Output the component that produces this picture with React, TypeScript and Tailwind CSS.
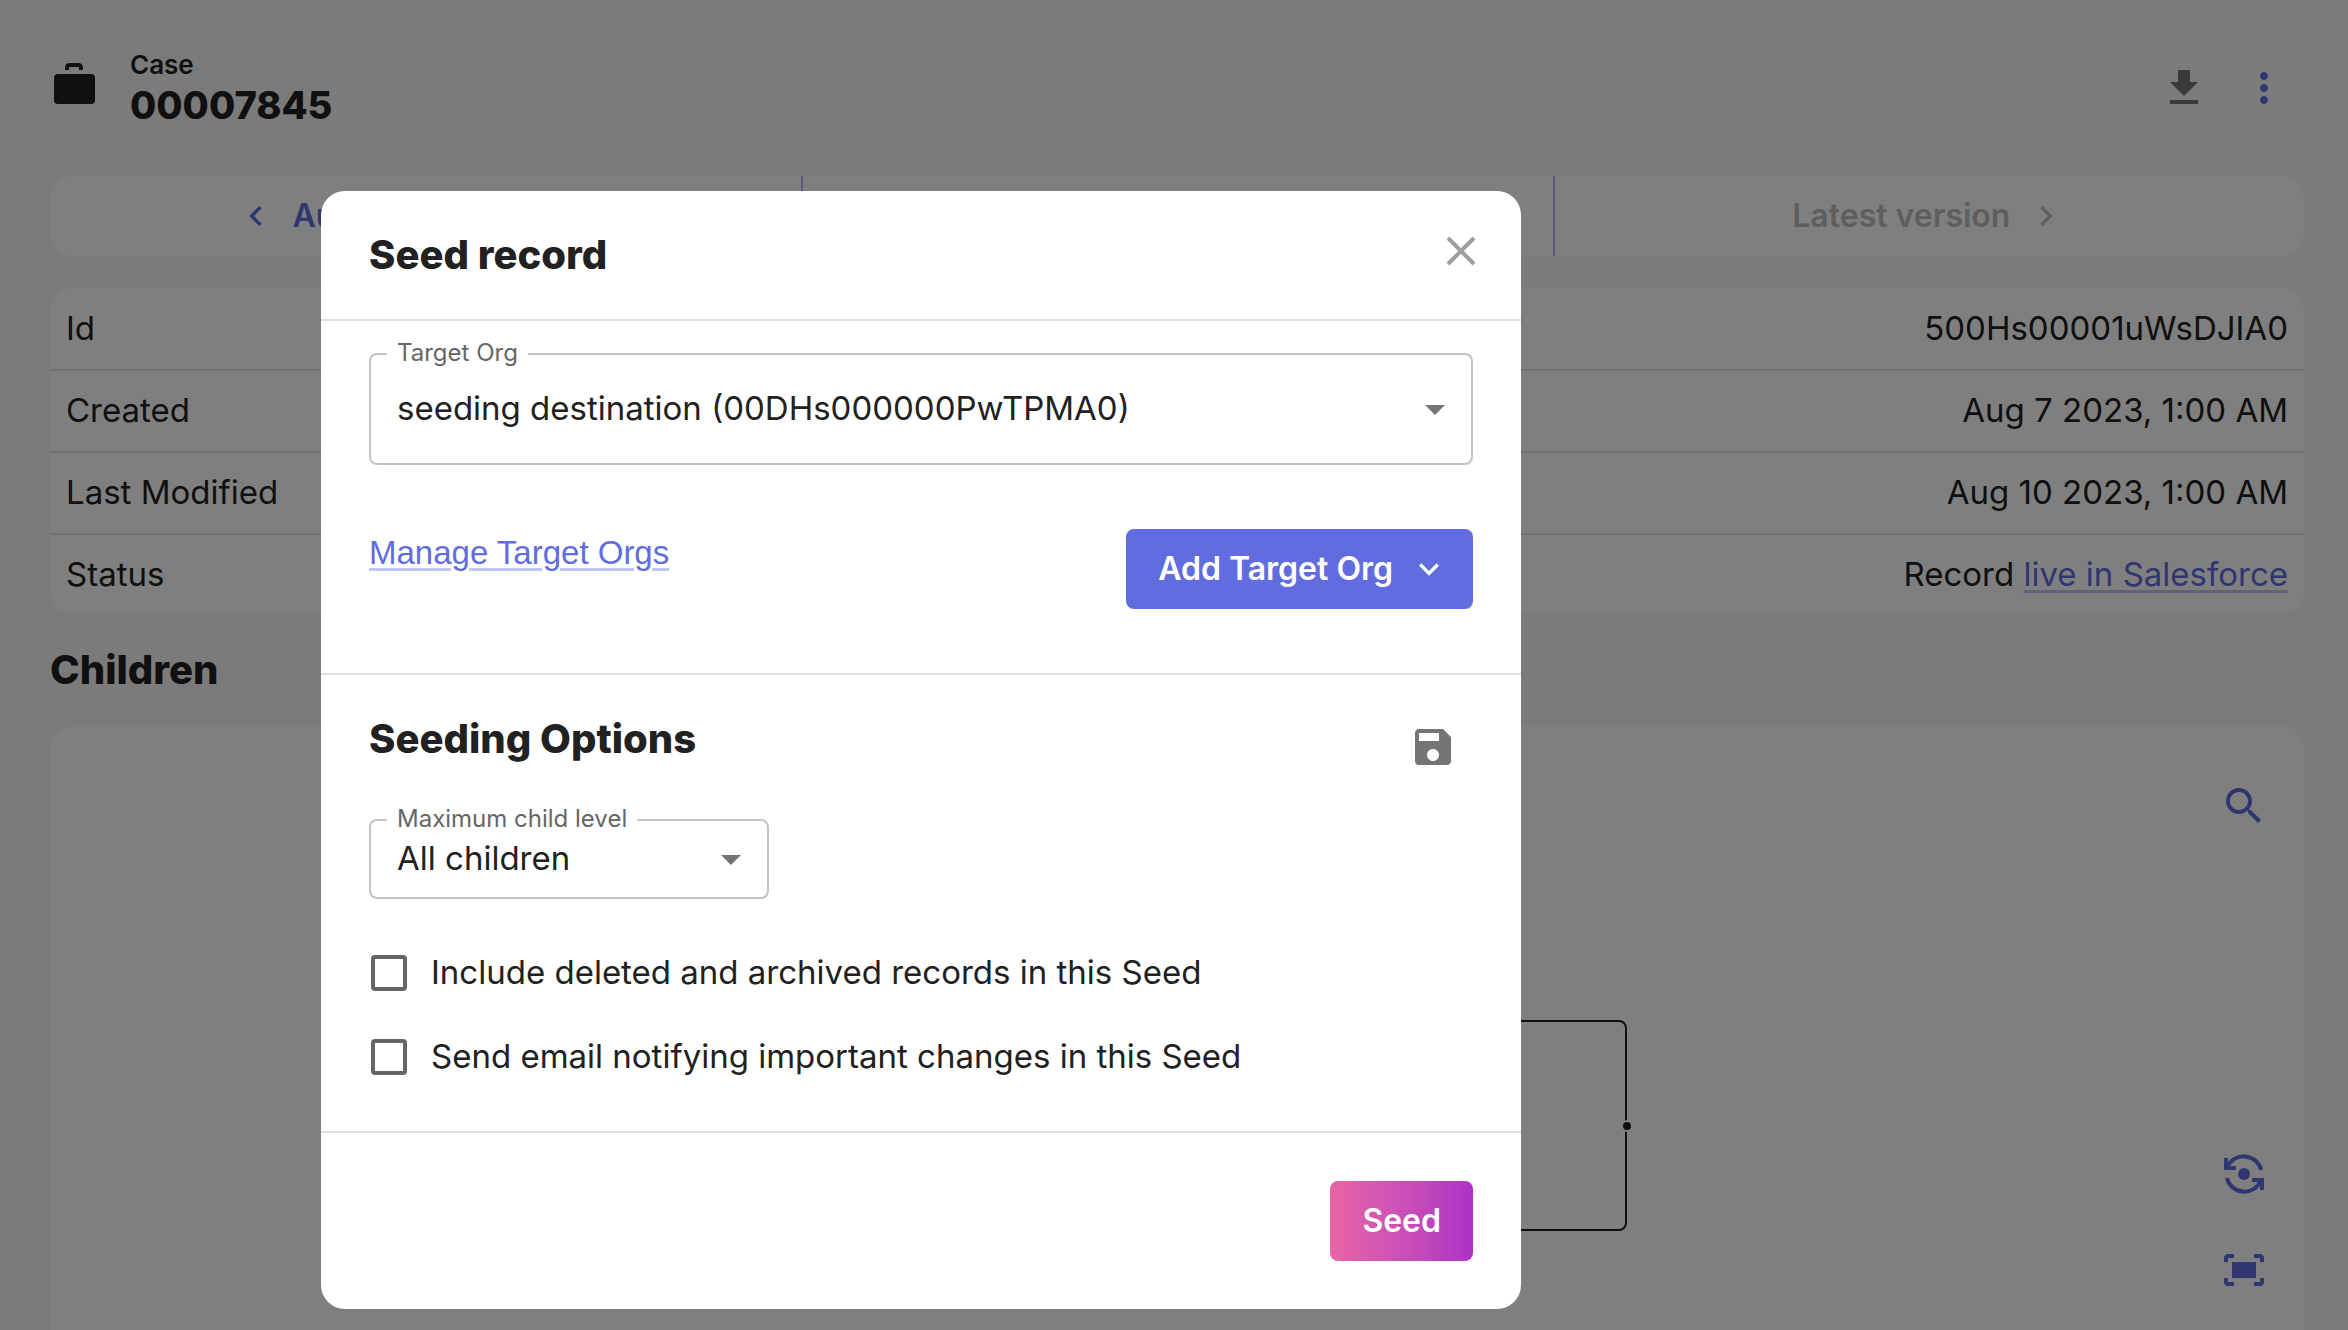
import type { ReactNode } from "react";

type IconProps = { d: string; className?: string };

function Icon({ d, className }: IconProps) {
  return (
    <svg viewBox="0 0 24 24" fill="currentColor" aria-hidden="true" className={className}>
      <path d={d} />
    </svg>
  );
}

const paths = {
  download: "M19 9h-4V3H9v6H5l7 7 7-7zM5 18v2h14v-2H5z",
  dots: "M12 8c1.1 0 2-.9 2-2s-.9-2-2-2-2 .9-2 2 .9 2 2 2zm0 2c-1.1 0-2 .9-2 2s.9 2 2 2 2-.9 2-2-.9-2-2-2zm0 6c-1.1 0-2 .9-2 2s.9 2 2 2 2-.9 2-2-.9-2-2-2z",
  left: "M15.41 7.41 14 6l-6 6 6 6 1.41-1.41L10.83 12z",
  right: "M10 6 8.59 7.41 13.17 12l-4.58 4.59L10 18l6-6z",
  down: "M7.41 8.59 12 13.17l4.59-4.58L18 10l-6 6-6-6z",
  drop: "M7 10l5 5 5-5z",
  search:
    "M15.5 14h-.79l-.28-.27C15.41 12.59 16 11.11 16 9.5 16 5.91 13.09 3 9.5 3S3 5.91 3 9.5 5.91 16 9.5 16c1.61 0 3.09-.59 4.23-1.57l.27.28v.79l5 4.99L20.49 19l-4.99-5zm-6 0C7.01 14 5 11.99 5 9.5S7.01 5 9.5 5 14 7.01 14 9.5 11.99 14 9.5 14z",
  save: "M17 3H5c-1.11 0-2 .9-2 2v14c0 1.1.89 2 2 2h14c1.1 0 2-.9 2-2V7l-4-4zm-5 16c-1.66 0-3-1.34-3-3s1.34-3 3-3 3 1.34 3 3-1.34 3-3 3zm3-10H5V5h10v4z",
  fit: "M17 4h3c1.1 0 2 .9 2 2v2h-2V6h-3V4zM4 8V6h3V4H4c-1.1 0-2 .9-2 2v2h2zm16 8v2h-3v2h3c1.1 0 2-.9 2-2v-2h-2zM7 18H4v-2H2v2c0 1.1.9 2 2 2h3v-2zM18 8H6v8h12V8z",
};

function ResetViewIcon() {
  return (
    <svg viewBox="0 0 24 24" fill="none" stroke="currentColor" strokeWidth="2" aria-hidden="true" className="size-12">
      <path d="M3.6 8.6A9 9 0 0 1 20.6 10" />
      <path d="M3.4 14A9 9 0 0 0 20.4 15.4" />
      <path d="M3 4v5h5M21 20v-5h-5" />
      <circle cx="12" cy="12" r="3" fill="currentColor" stroke="none" />
    </svg>
  );
}

function Row({ name, children }: { name: string; children: ReactNode }) {
  return (
    <tr className="h-[82px] border-b-2 border-[#e0e0e0] last:h-20 last:border-b-0">
      <th scope="row" className="px-4 text-left font-normal">
        {name}
      </th>
      <td className="px-4 text-right">{children}</td>
    </tr>
  );
}

function Field({ id, label, value, className }: { id: string; label: string; value: string; className: string }) {
  return (
    <div className="relative">
      <label htmlFor={id} className="absolute -top-4 left-[18px] bg-white px-[10px] text-2xl leading-8 text-[#666]">
        {label}
      </label>
      <select
        id={id}
        className={`w-full appearance-none rounded-lg border-2 border-[#c4c4c4] bg-white pr-16 pl-[26px] text-[33px] text-[#212121] ${className}`}
      >
        <option>{value}</option>
      </select>
      <Icon d={paths.drop} className="pointer-events-none absolute top-1/2 right-[14px] size-12 -translate-y-1/2 text-[#757575]" />
    </div>
  );
}

function Check({ label }: { label: string }) {
  return (
    <label className="flex h-[84px] items-center gap-6 text-[33px]">
      <input type="checkbox" className="ml-[2px] size-9 shrink-0 appearance-none rounded-sm border-4 border-[#666] bg-white" />
      {label}
    </label>
  );
}

export default function App() {
  return (
    <div className="h-screen overflow-hidden bg-[#f7f7f7] font-['Inter',sans-serif] text-[33px] text-[#212121]">
      <main className="flex h-full flex-col border-l-2 border-[#fafafa] pr-11 pl-12">
        <header className="flex h-44 shrink-0 items-center pr-4">
          <svg viewBox="0 0 48 48" aria-hidden="true" className="mb-4 size-12">
            <rect x="4" y="18" width="41" height="30" rx="4" fill="currentColor" />
            <path d="M17 14v-2q0-3 3-3h8q3 0 3 3v2" fill="none" stroke="currentColor" strokeWidth="4" />
          </svg>
          <div className="ml-8 flex-1 pt-[2px]">
            <p className="text-[26px] leading-8 font-semibold">Case</p>
            <h1 className="text-[38px] leading-12 font-extrabold">00007845</h1>
          </div>
          <button aria-label="Download" className="mr-8 text-[#757575]">
            <Icon d={paths.download} className="size-12" />
          </button>
          <button aria-label="More actions" className="text-[#616ddf]">
            <Icon d={paths.dots} className="size-12" />
          </button>
        </header>

        <nav className="grid h-20 shrink-0 grid-cols-3 overflow-hidden rounded-3xl bg-white text-[32px] font-semibold">
          <button className="flex items-center justify-center gap-4 text-[#616ddf]">
            <Icon d={paths.left} className="size-10" />
            Aug 7 2023, 1:00 AM
          </button>
          <button className="border-l-2 border-[#b0b6ef] text-[#616ddf]">Aug 10 2023, 1:00 AM</button>
          <button disabled className="flex items-center justify-center gap-4 border-l-2 border-[#b0b6ef] text-[#bdbdbd]">
            Latest version
            <Icon d={paths.right} className="size-10" />
          </button>
        </nav>

        <div className="mt-8 shrink-0 overflow-hidden rounded-3xl bg-white">
          <table className="w-full border-collapse">
            <tbody>
              <Row name="Id">500Hs00001uWsDJIA0</Row>
              <Row name="Created">Aug 7 2023, 1:00 AM</Row>
              <Row name="Last Modified">Aug 10 2023, 1:00 AM</Row>
              <Row name="Status">
                Record{" "}
                <a href="#record" className="text-[#616ddf] underline decoration-[#c0c5f2] decoration-3 underline-offset-4">
                  live in Salesforce
                </a>
              </Row>
            </tbody>
          </table>
        </div>

        <h2 className="my-8 shrink-0 text-[40px] leading-12 font-extrabold">Children</h2>

        <section className="relative flex-1 rounded-t-3xl bg-white">
          <div className="absolute top-[294px] right-[677px] h-[211px] w-[800px] rounded-lg border-2 border-[#212121]">
            <span className="absolute top-1/2 -right-2 box-content size-2 -translate-y-1/2 rounded-full border-2 border-white bg-[#1a1a2e]" />
          </div>
          <div className="absolute inset-y-0 right-9 flex flex-col text-[#616ddf]">
            <button aria-label="Search" className="mt-14">
              <Icon d={paths.search} className="size-12" />
            </button>
            <button aria-label="Reset view" className="mt-80">
              <ResetViewIcon />
            </button>
            <button aria-label="Fit view" className="mt-12">
              <Icon d={paths.fit} className="size-12" />
            </button>
          </div>
        </section>
      </main>

      <div className="fixed inset-0 bg-black/50" />

      <div role="dialog" aria-labelledby="seed-title" className="fixed top-[191px] left-[321px] w-[1200px] divide-y-2 divide-[#e0e0e0] rounded-3xl bg-white">
        <header className="flex h-[130px] items-center justify-between pr-9 pl-12">
          <h2 id="seed-title" className="text-[40px] leading-12 font-extrabold">
            Seed record
          </h2>
          <button aria-label="Close" className="mb-2 text-[#9e9e9e]">
            <svg viewBox="0 0 48 48" fill="none" stroke="currentColor" strokeWidth="4" aria-hidden="true" className="size-12">
              <path d="M11 11l26 26M37 11L11 37" />
            </svg>
          </button>
        </header>

        <section className="px-12 pt-8 pb-16">
          <Field id="target-org" label="Target Org" value="seeding destination (00DHs000000PwTPMA0)" className="h-28" />
          <div className="mt-16 flex items-start justify-between">
            <a
              href="#orgs"
              className="font-['Liberation_Sans',sans-serif] text-[33px] leading-12 text-[#616ddf] underline decoration-[#c0c5f2] decoration-3 underline-offset-4"
            >
              Manage Target Orgs
            </a>
            <button className="flex h-20 items-center gap-4 rounded-lg bg-[#616ddf] pr-6 pl-8 text-[32px] font-semibold text-white">
              Add Target Org
              <Icon d={paths.down} className="size-10" />
            </button>
          </div>
        </section>

        <section className="px-12 pt-10 pb-8">
          <div className="flex items-start justify-between pr-4">
            <h3 className="text-[40px] leading-12 font-extrabold">Seeding Options</h3>
            <button aria-label="Save options" className="pt-2 text-[#757575]">
              <Icon d={paths.save} className="size-12" />
            </button>
          </div>
          <div className="mt-12 mb-8 w-[400px]">
            <Field id="child-level" label="Maximum child level" value="All children" className="h-20" />
          </div>
          <Check label="Include deleted and archived records in this Seed" />
          <Check label="Send email notifying important changes in this Seed" />
        </section>

        <footer className="flex justify-end p-12">
          <button className="h-20 rounded-lg bg-linear-to-r from-[#e965a3] to-[#ae31c6] px-8 text-[32px] font-semibold text-white">Seed</button>
        </footer>
      </div>
    </div>
  );
}
